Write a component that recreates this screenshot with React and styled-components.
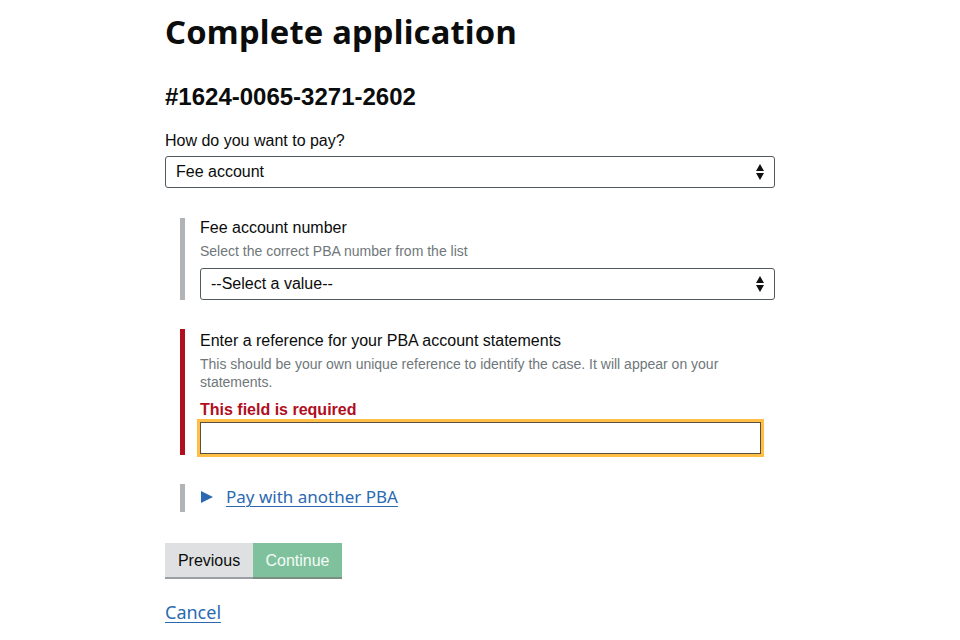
import React from "react";
import styled, { createGlobalStyle } from "styled-components";

const Global = createGlobalStyle`
  html, body { margin: 0; padding: 0; background: #fff; }
  body { font-family: "Liberation Sans", Arial, sans-serif; color: #0b0c0c; }
`;

const Page = styled.main`
  width: 610px;
  margin-left: 165px;
  padding-top: 10px;
`;

const Title = styled.h1`
  font-family: "Noto Sans", "Open Sans", sans-serif;
  font-weight: 700;
  font-size: 32.7px;
  line-height: 44px;
  margin: 0 0 29px;
  letter-spacing: 0.2px;
`;

const CaseNo = styled.h2`
  font-family: "Liberation Sans", Arial, sans-serif;
  font-weight: 700;
  font-size: 24px;
  line-height: 28px;
  margin: 0 0 20px;
`;

const Label = styled.label`
  display: block;
  font-size: 16px;
  line-height: 20px;
  margin-bottom: ${(p) => p.$mb || 4}px;
`;

const Hint = styled.div`
  font-size: 14px;
  line-height: 18px;
  color: #6f777b;
  margin-bottom: ${(p) => p.$mb || 8}px;
`;

const Error = styled.div`
  font-size: 16px;
  font-weight: 700;
  color: #b10e1e;
  line-height: 20px;
  margin-bottom: 1px;
`;

const SelectBox = styled.div`
  box-sizing: border-box;
  height: 32px;
  border: 1px solid #505a5f;
  border-radius: 3px;
  display: flex;
  align-items: center;
  justify-content: space-between;
  padding: 0 10px;
  font-size: 16px;
  background: #fff;
`;

const Arrows = () => (
  <svg width="8" height="16" viewBox="0 0 8 16">
    <path d="M4 0 L8 7 L0 7 Z M0 9 L8 9 L4 16 Z" fill="#111" />
  </svg>
);

const Indented = styled.div`
  margin-left: 15px;
  border-left: 5px solid ${(p) => (p.$error ? "#b10e1e" : "#b1b4b6")};
  padding-left: 15px;
  padding-top: ${(p) => p.$pt || 0}px;
  margin-top: ${(p) => p.$mt || 0}px;
`;

const TextInput = styled.div`
  box-sizing: border-box;
  height: 34px;
  width: 563px;
  margin-left: -1px;
  border: 2px solid #5a4f3f;
  outline: 3px solid #ffbf47;
  outline-offset: -1px;
  background: #fff;
`;

const DetailsRow = styled.div`
  display: flex;
  align-items: center;
  gap: 13px;
  height: 28px;
  padding-left: 1px;
  padding-bottom: 3px;
  box-sizing: border-box;
`;

const Link = styled.a`
  font-family: "Noto Sans", "Open Sans", sans-serif;
  font-size: ${(p) => p.$size || 17}px;
  color: #2b6ab1;
  text-decoration: underline;
  text-underline-offset: 3px;
  text-decoration-thickness: 1px;
  cursor: pointer;
`;

const Buttons = styled.div`
  display: flex;
  margin-top: 31px;
`;

const Button = styled.button`
  font-family: "Liberation Sans", Arial, sans-serif;
  font-size: 16px;
  border: none;
  height: 34px;
  padding: 2px 12px 0;
  background: ${(p) => (p.$primary ? "#7fc19d" : "#dee0e2")};
  color: ${(p) => (p.$primary ? "#f4fbf6" : "#0b0c0c")};
  box-shadow: 0 2px 0 ${(p) => (p.$primary ? "#7a8f82" : "#9a9fa3")};
  width: ${(p) => p.$w}px;
`;

const CancelRow = styled.div`
  margin-top: 23px;
`;

export default function App() {
  return (
    <>
      <Global />
      <Page>
        <Title>Complete application</Title>
        <CaseNo>#1624-0065-3271-2602</CaseNo>
        <Label $mb={5}>How do you want to pay?</Label>
        <SelectBox>
          <span>Fee account</span>
          <Arrows />
        </SelectBox>

        <Indented $mt={30}>
          <Label $mb={4}>Fee account number</Label>
          <Hint>Select the correct PBA number from the list</Hint>
          <SelectBox>
            <span>--Select a value--</span>
            <Arrows />
          </SelectBox>
        </Indented>

        <Indented $error $mt={29} $pt={2}>
          <Label $mb={4}>Enter a reference for your PBA account statements</Label>
          <Hint $mb={9}>
            This should be your own unique reference to identify the case. It will appear on your
            statements.
          </Hint>
          <Error>This field is required</Error>
          <TextInput />
        </Indented>

        <Indented $mt={29}>
          <DetailsRow>
            <svg width="12" height="12" viewBox="0 0 12 12">
              <path d="M0 0 L12 6 L0 12 Z" fill="#2b6ab1" />
            </svg>
            <Link>Pay with another PBA</Link>
          </DetailsRow>
        </Indented>

        <Buttons>
          <Button $w={88}>Previous</Button>
          <Button $primary $w={89}>Continue</Button>
        </Buttons>

        <CancelRow>
          <Link $size={18}>Cancel</Link>
        </CancelRow>
      </Page>
    </>
  );
}
